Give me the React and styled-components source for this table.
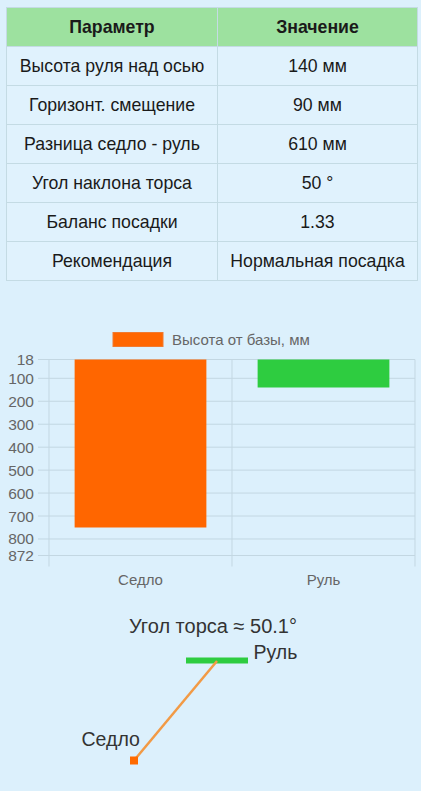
import React from "react";
import styled, { createGlobalStyle } from "styled-components";

const Global = createGlobalStyle`
  html, body { margin: 0; padding: 0; background: #dcf0fc; }
  body { font-family: "Liberation Sans", Arial, sans-serif; }
`;

const Page = styled.div`
  width: 421px;
  min-height: 791px;
  background: #dcf0fc;
  display: flex;
  flex-direction: column;
`;

const TableWrap = styled.div`
  padding: 7px 6px 0 6px;
`;

const Table = styled.table`
  width: 409px;
  border-collapse: collapse;
  table-layout: fixed;
  font-size: 17.7px;
  color: #1a1a1a;
`;

const HeadCell = styled.th`
  background: #9de19f;
  height: 38px;
  padding: 0;
  font-weight: bold;
  text-align: center;
  border: 1px solid #c4dbe4;
  width: ${(p) => p.$w}px;
`;

const Cell = styled.td`
  background: #e0f2fd;
  height: 38px;
  padding: 0;
  text-align: center;
  border: 1px solid #c4dbe4;
  white-space: nowrap;
`;

const ChartFigure = styled.figure`
  margin: 20px 0 0 0;
  width: 421px;
  height: 290px;
  svg { display: block; font-family: "Liberation Sans", Arial, sans-serif; }
`;

const Diagram = styled.figure`
  margin: 0;
  width: 421px;
  height: 201px;
  svg { display: block; font-family: "Liberation Sans", Arial, sans-serif; }
`;

const rows = [
  ["Высота руля над осью", "140 мм"],
  ["Горизонт. смещение", "90 мм"],
  ["Разница седло - руль", "610 мм"],
  ["Угол наклона торса", "50 °"],
  ["Баланс посадки", "1.33"],
  ["Рекомендация", "Нормальная посадка"],
];

// chart geometry (y offsets relative to figure top at page y=300)
const OY = 300;
const top = 358.5 - OY;
const bottom = 554.5 - OY;
const left = 49;
const right = 415;
const min = 18;
const max = 872;
const yOf = (v) => top + ((v - min) / (max - min)) * (bottom - top);
const ticks = [18, 100, 200, 300, 400, 500, 600, 700, 800, 872];
const bars = [
  { label: "Седло", value: 750, color: "#ff6600" },
  { label: "Руль", value: 140, color: "#2ecc40" },
];
const catW = (right - left) / bars.length;
const barW = catW * 0.72;
const grid = "#c3d7e2";

function HeightChart() {
  return (
    <ChartFigure>
      <svg width="421" height="290" viewBox="0 0 421 290">
        <rect x="113" y="31.5" width="50" height="14" fill="#ff6600" stroke="#f07a30" strokeWidth="1" />
        <text x="172" y="43.5" fontSize="15" fill="#666">Высота от базы, мм</text>
        {ticks.map((t) => (
          <g key={t}>
            <line x1="38" x2={right} y1={yOf(t)} y2={yOf(t)} stroke={grid} strokeWidth="1" />
            <text x="34" y={yOf(t) + 5.5} fontSize="15.5" fill="#666" textAnchor="end">{t}</text>
          </g>
        ))}
        {[0, 1, 2].map((i) => (
          <line key={i} x1={left + i * catW} x2={left + i * catW} y1={top} y2={bottom + 11} stroke={grid} strokeWidth="1" />
        ))}
        {bars.map((b, i) => {
          const cx = left + catW * (i + 0.5);
          return (
            <g key={b.label}>
              <rect x={cx - barW / 2} y={top} width={barW} height={yOf(b.value) - top} fill={b.color} />
              <text x={cx} y="283.5" fontSize="15" fill="#666" textAnchor="middle">{b.label}</text>
            </g>
          );
        })}
      </svg>
    </ChartFigure>
  );
}

function TorsoDiagram() {
  const oy = 590;
  return (
    <Diagram>
      <svg width="421" height="201" viewBox="0 0 421 201">
        <text x="213" y={632 - oy} fontSize="20" fill="#333" textAnchor="middle">Угол торса ≈ 50.1°</text>
        <line x1="186" x2="248" y1={659.5 - oy} y2={659.5 - oy} stroke="#2ecc40" strokeWidth="6" />
        <text x="253.5" y={658 - oy} fontSize="19.5" fill="#333">Руль</text>
        <line x1="217" y1={660 - oy} x2="134" y2={759.5 - oy} stroke="#f29a45" strokeWidth="2.5" />
        <rect x="130" y={755.5 - oy} width="8" height="8" fill="#ff6a00" />
        <text x="81.5" y={745 - oy} fontSize="19.5" fill="#333">Седло</text>
      </svg>
    </Diagram>
  );
}

export default function App() {
  return (
    <Page>
      <Global />
      <TableWrap>
        <Table>
          <thead>
            <tr>
              <HeadCell $w={210}>Параметр</HeadCell>
              <HeadCell $w={199}>Значение</HeadCell>
            </tr>
          </thead>
          <tbody>
            {rows.map(([k, v]) => (
              <tr key={k}>
                <Cell>{k}</Cell>
                <Cell>{v}</Cell>
              </tr>
            ))}
          </tbody>
        </Table>
      </TableWrap>
      <HeightChart />
      <TorsoDiagram />
    </Page>
  );
}
